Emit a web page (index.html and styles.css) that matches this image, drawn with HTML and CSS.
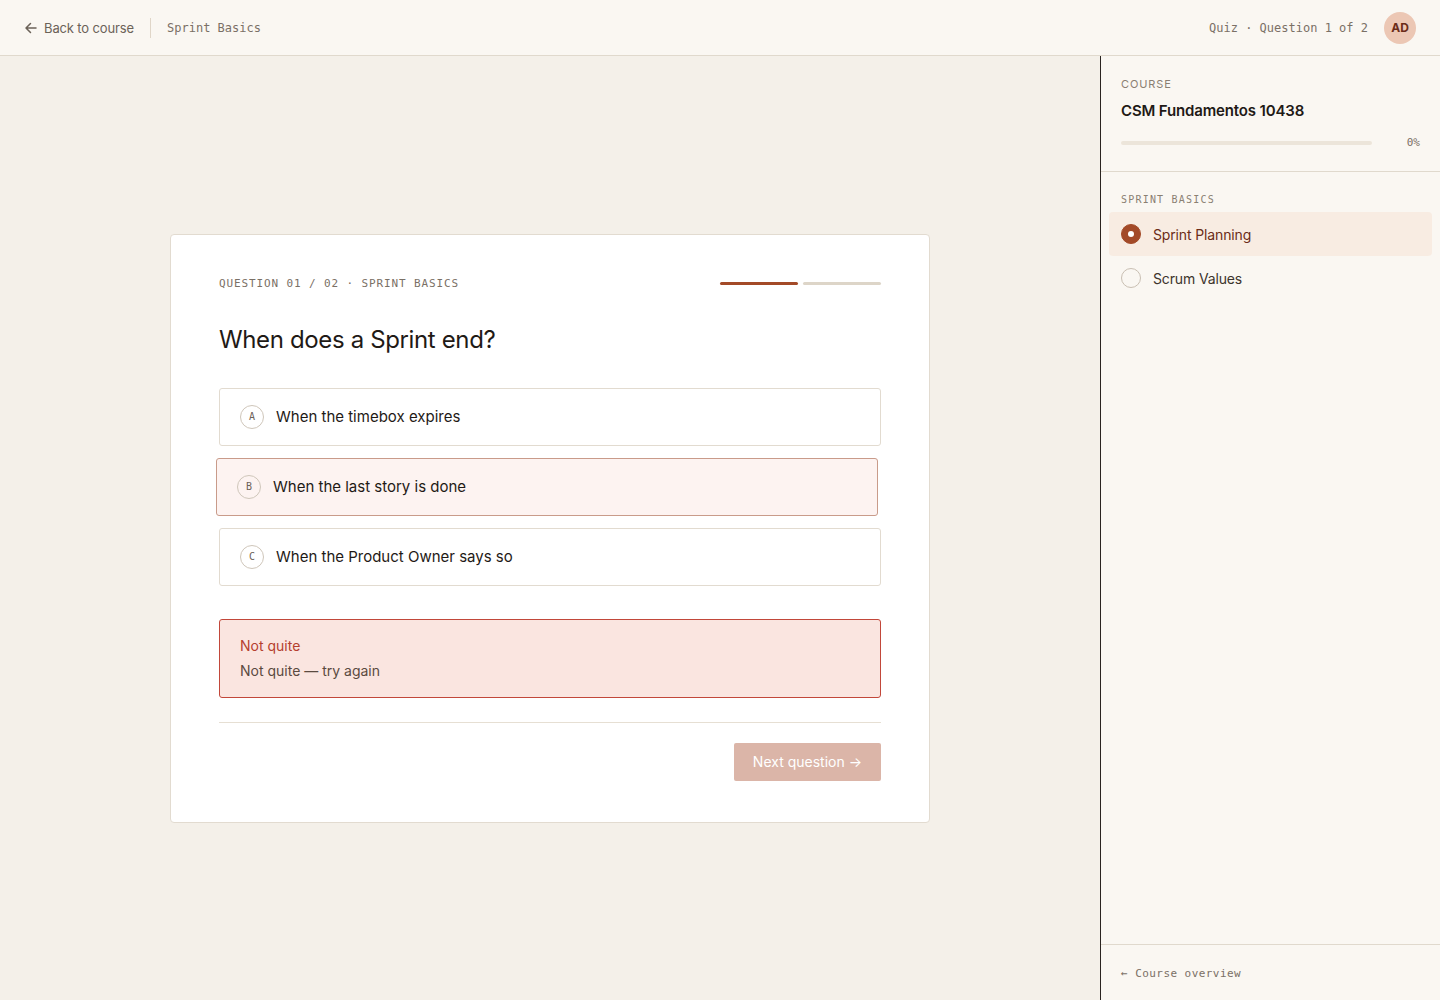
FILE: index.html
```html
<!DOCTYPE html>
<html lang="en">
<head>
    <meta charset="UTF-8">
    <meta name="viewport" content="width=device-width, initial-scale=1.0">
    <title>Quiz - Sprint Basics</title>
    <link rel="stylesheet" href="styles.css">
</head>
<body>
    <header class="topbar">
        <div class="topbar-left">
            <a class="back-link" href="#">
                <svg width="14" height="14" viewBox="0 0 14 14" fill="none" stroke="currentColor" stroke-width="1.5" stroke-linecap="round" stroke-linejoin="round">
                    <path d="M12 7H2.5M6.5 2.5L2 7l4.5 4.5"/>
                </svg>
                Back to course
            </a>
            <span class="divider-v"></span>
            <span class="crumb">Sprint Basics</span>
        </div>
        <div class="topbar-right">
            <span class="crumb">Quiz · Question 1 of 2</span>
            <span class="avatar">AD</span>
        </div>
    </header>

    <div class="layout">
        <main class="stage">
            <section class="quiz-card">
                <div class="quiz-meta">
                    <span class="meta-text">QUESTION 01 / 02 · SPRINT BASICS</span>
                    <div class="steps">
                        <span class="step done"></span>
                        <span class="step"></span>
                    </div>
                </div>

                <h1 class="question">When does a Sprint end?</h1>

                <div class="options">
                    <button class="option">
                        <span class="letter">A</span>
                        When the timebox expires
                    </button>
                    <button class="option wrong">
                        <span class="letter">B</span>
                        When the last story is done
                    </button>
                    <button class="option">
                        <span class="letter">C</span>
                        When the Product Owner says so
                    </button>
                </div>

                <div class="feedback">
                    <div class="feedback-title">Not quite</div>
                    <div class="feedback-text">Not quite — try again</div>
                </div>

                <div class="card-footer">
                    <button class="next-btn" disabled>Next question →</button>
                </div>
            </section>
        </main>

        <aside class="sidebar">
            <div class="course-info">
                <div class="label">COURSE</div>
                <div class="course-title">CSM Fundamentos 10438</div>
                <div class="progress-row">
                    <div class="progress-track"><div class="progress-fill" style="width: 0%"></div></div>
                    <span class="progress-pct">0%</span>
                </div>
            </div>

            <div class="lesson-group">
                <div class="group-label">SPRINT BASICS</div>
                <ul class="lessons">
                    <li class="lesson active">
                        <span class="radio"></span>
                        Sprint Planning
                    </li>
                    <li class="lesson">
                        <span class="radio"></span>
                        Scrum Values
                    </li>
                </ul>
            </div>

            <div class="sidebar-footer">
                <a href="#">← Course overview</a>
            </div>
        </aside>
    </div>
</body>
</html>
```

FILE: styles.css
```css
/* Base */
* {
    box-sizing: border-box;
}

body {
    margin: 0;
    height: 100vh;
    display: flex;
    flex-direction: column;
    font-family: 'Inter', 'Liberation Sans', sans-serif;
    background-color: #f4f0e9;
    color: #1f1a16;
}

a {
    text-decoration: none;
    color: inherit;
}

button {
    font-family: inherit;
}

/* Top bar */
.topbar {
    height: 56px;
    flex-shrink: 0;
    display: flex;
    align-items: center;
    justify-content: space-between;
    padding: 0 24px;
    background-color: #faf7f2;
    border-bottom: 1px solid #e0d9cd;
}

.topbar-left,
.topbar-right {
    display: flex;
    align-items: center;
}

.back-link {
    display: flex;
    align-items: center;
    gap: 6px;
    font-size: 13px;
    color: #6b6258;
    letter-spacing: -0.01em;
}

.divider-v {
    width: 1px;
    height: 20px;
    background-color: #e0d6c8;
    margin: 0 16px;
}

.crumb {
    font-family: 'DejaVu Sans Mono', 'Liberation Mono', monospace;
    font-size: 12px;
    color: #7a7066;
}

.avatar {
    width: 32px;
    height: 32px;
    border-radius: 50%;
    margin-left: 16px;
    background-color: #ecc7b4;
    color: #6b2c18;
    font-size: 12px;
    font-weight: 700;
    display: flex;
    align-items: center;
    justify-content: center;
}

/* Layout */
.layout {
    flex: 1;
    display: flex;
    min-height: 0;
}

.stage {
    flex: 1;
    display: flex;
    align-items: center;
    justify-content: center;
}

/* Quiz card */
.quiz-card {
    width: 760px;
    background-color: #ffffff;
    border: 1px solid #e2dbd0;
    border-radius: 4px;
    padding: 42px 48px 41px;
}

.quiz-meta {
    display: flex;
    align-items: center;
    justify-content: space-between;
}

.meta-text {
    font-family: 'DejaVu Sans Mono', 'Liberation Mono', monospace;
    font-size: 11px;
    letter-spacing: 0.08em;
    color: #7a7066;
}

.steps {
    display: flex;
    gap: 5px;
}

.step {
    width: 78px;
    height: 3px;
    border-radius: 2px;
    background-color: #ddd5c8;
}

.step.done {
    background-color: #a34a28;
}

.question {
    font-size: 24px;
    font-weight: 400;
    margin: 35px 0 34px;
    letter-spacing: -0.015em;
}

.options {
    display: flex;
    flex-direction: column;
    gap: 12px;
}

.option {
    display: flex;
    align-items: center;
    gap: 12px;
    height: 58px;
    padding: 0 20px;
    background-color: #ffffff;
    border: 1px solid #e2dbd0;
    border-radius: 3px;
    font-size: 15px;
    color: #1f1a16;
    text-align: left;
    cursor: pointer;
}

.option.wrong {
    background-color: #fdf3f1;
    border-color: #c99b8a;
    transform: translateX(-3px);
}

.letter {
    width: 24px;
    height: 24px;
    border-radius: 50%;
    border: 1px solid #cfc6ba;
    display: flex;
    align-items: center;
    justify-content: center;
    font-family: 'DejaVu Sans Mono', 'Liberation Mono', monospace;
    font-size: 10px;
    color: #6b6258;
    flex-shrink: 0;
}

/* Feedback */
.feedback {
    margin-top: 33px;
    padding: 17px 20px 18px;
    background-color: #fae5e0;
    border: 1px solid #c2473a;
    border-radius: 3px;
    font-size: 14px;
}

.feedback-title {
    color: #b5402e;
    margin-bottom: 8px;
}

.feedback-text {
    color: #5a4a40;
}

.card-footer {
    margin-top: 24px;
    padding-top: 20px;
    border-top: 1px solid #e6dfd3;
    display: flex;
    justify-content: flex-end;
}

.next-btn {
    height: 38px;
    padding: 0 19px;
    border: none;
    border-radius: 2px;
    background-color: #dbb5a8;
    color: #ffffff;
    font-size: 14px;
}

/* Sidebar */
.sidebar {
    width: 340px;
    flex-shrink: 0;
    display: flex;
    flex-direction: column;
    background-color: #faf7f2;
    border-left: 1px solid #2a2420;
}

.course-info {
    padding: 21px 20px 22px;
    border-bottom: 1px solid #e0d9cd;
}

.label {
    font-size: 11px;
    letter-spacing: 0.08em;
    color: #8a7f72;
}

.course-title {
    font-size: 15px;
    font-weight: 600;
    margin-top: 10px;
    letter-spacing: -0.01em;
}

.progress-row {
    display: flex;
    align-items: center;
    justify-content: space-between;
    margin-top: 16px;
}

.progress-track {
    width: 251px;
    height: 4px;
    border-radius: 2px;
    background-color: #ece5da;
}

.progress-fill {
    height: 100%;
    border-radius: 2px;
    background-color: #a34a28;
}

.progress-pct {
    font-family: 'DejaVu Sans Mono', 'Liberation Mono', monospace;
    font-size: 11px;
    color: #7a7066;
}

.lesson-group {
    padding: 22px 8px 0;
}

.group-label {
    font-family: 'DejaVu Sans Mono', 'Liberation Mono', monospace;
    font-size: 10px;
    letter-spacing: 0.12em;
    color: #8a7f72;
    padding: 0 12px;
    margin-bottom: 7px;
}

.lessons {
    list-style: none;
    margin: 0;
    padding: 0;
}

.lesson {
    display: flex;
    align-items: center;
    gap: 12px;
    height: 44px;
    padding: 0 12px;
    border-radius: 4px;
    font-size: 14px;
    color: #3d342c;
    letter-spacing: -0.01em;
}

.lesson.active {
    background-color: #f8ece2;
    color: #6b2c18;
}

.radio {
    width: 20px;
    height: 20px;
    border-radius: 50%;
    border: 1px solid #c9bfb2;
    display: flex;
    align-items: center;
    justify-content: center;
}

.lesson.active .radio {
    background-color: #a34a28;
    border-color: #a34a28;
}

.lesson.active .radio::after {
    content: '';
    width: 6px;
    height: 6px;
    border-radius: 50%;
    background-color: #ffffff;
}

.sidebar-footer {
    margin-top: auto;
    padding: 22px 20px 20px;
    border-top: 1px solid #e0d9cd;
    font-family: 'DejaVu Sans Mono', 'Liberation Mono', monospace;
    font-size: 11px;
    letter-spacing: 0.04em;
    color: #7a7066;
}
```
